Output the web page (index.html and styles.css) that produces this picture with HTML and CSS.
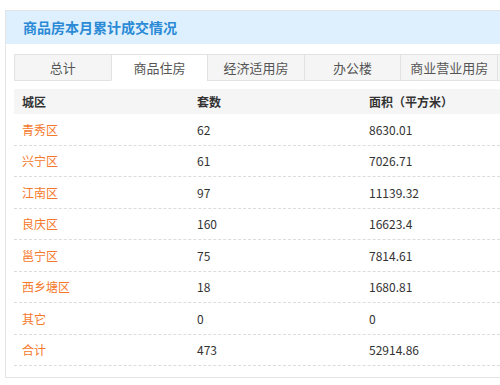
FILE: index.html
```html
<!DOCTYPE html>
<html lang="zh-CN">
<head>
<meta charset="utf-8">
<title>商品房本月累计成交情况</title>
<link rel="stylesheet" href="styles.css">
</head>
<body>
<div class="panel">
  <div class="panel-head">商品房本月累计成交情况</div>
  <div class="panel-body">
    <div class="tabs">
      <div class="tab">总计</div>
      <div class="tab active">商品住房</div>
      <div class="tab">经济适用房</div>
      <div class="tab">办公楼</div>
      <div class="tab">商业营业用房</div>
      <div class="tab"></div>
    </div>
    <div class="table">
      <div class="row head"><div class="c1">城区</div><div class="c2">套数</div><div class="c3">面积（平方米）</div></div>
      <div class="row"><div class="c1 name">青秀区</div><div class="c2">62</div><div class="c3">8630.01</div></div>
      <div class="row"><div class="c1 name">兴宁区</div><div class="c2">61</div><div class="c3">7026.71</div></div>
      <div class="row"><div class="c1 name">江南区</div><div class="c2">97</div><div class="c3">11139.32</div></div>
      <div class="row"><div class="c1 name">良庆区</div><div class="c2">160</div><div class="c3">16623.4</div></div>
      <div class="row"><div class="c1 name">邕宁区</div><div class="c2">75</div><div class="c3">7814.61</div></div>
      <div class="row"><div class="c1 name">西乡塘区</div><div class="c2">18</div><div class="c3">1680.81</div></div>
      <div class="row"><div class="c1 name">其它</div><div class="c2">0</div><div class="c3">0</div></div>
      <div class="row"><div class="c1 name">合计</div><div class="c2">473</div><div class="c3">52914.86</div></div>
    </div>
  </div>
</div>
</body>
</html>
```
FILE: styles.css
```css
html, body {
  margin: 0;
  padding: 0;
  background: #fff;
  overflow: hidden;
}
body {
  font-family: "Noto Sans CJK SC", "Noto Sans", sans-serif;
  font-size: 12px;
  color: #333;
  padding: 10px 0 0 5px;
}
.panel {
  width: 530px;
  border: 1px solid #e4e4e4;
  box-sizing: border-box;
}
.panel-head {
  height: 33px;
  line-height: 33px;
  background: #def0fd;
  color: #2b8ad6;
  font-size: 14px;
  font-weight: 700;
  padding-left: 17px;
}
.panel-body {
  padding: 10px 9px 11px 8px;
}
.tabs {
  display: flex;
  height: 27px;
}
.tab {
  flex: 0 0 96.6px;
  box-sizing: border-box;
  height: 27px;
  line-height: 25px;
  text-align: center;
  font-size: 13px;
  color: #555;
  background: #f5f5f5;
  border: 1px solid #e2e2e2;
  border-right: none;
}
.tab.active {
  background: #fff;
  border-bottom-color: #fff;
}
.table {
  margin-top: 8px;
}
.row {
  display: flex;
  height: 31.5px;
  box-sizing: border-box;
  border-bottom: 1px dashed #dcdcdc;
  align-items: center;
}
.row.head {
  height: 25px;
  background: #f5f5f5;
  border-bottom: none;
  font-weight: 700;
  color: #333;
}
.c1 {
  width: 175px;
  padding-left: 8px;
  box-sizing: border-box;
}
.c2 {
  width: 172px;
  padding-left: 8px;
  box-sizing: border-box;
}
.c3 {
  flex: 1;
  padding-left: 8px;
}
.name {
  color: #f5782a;
}
```
